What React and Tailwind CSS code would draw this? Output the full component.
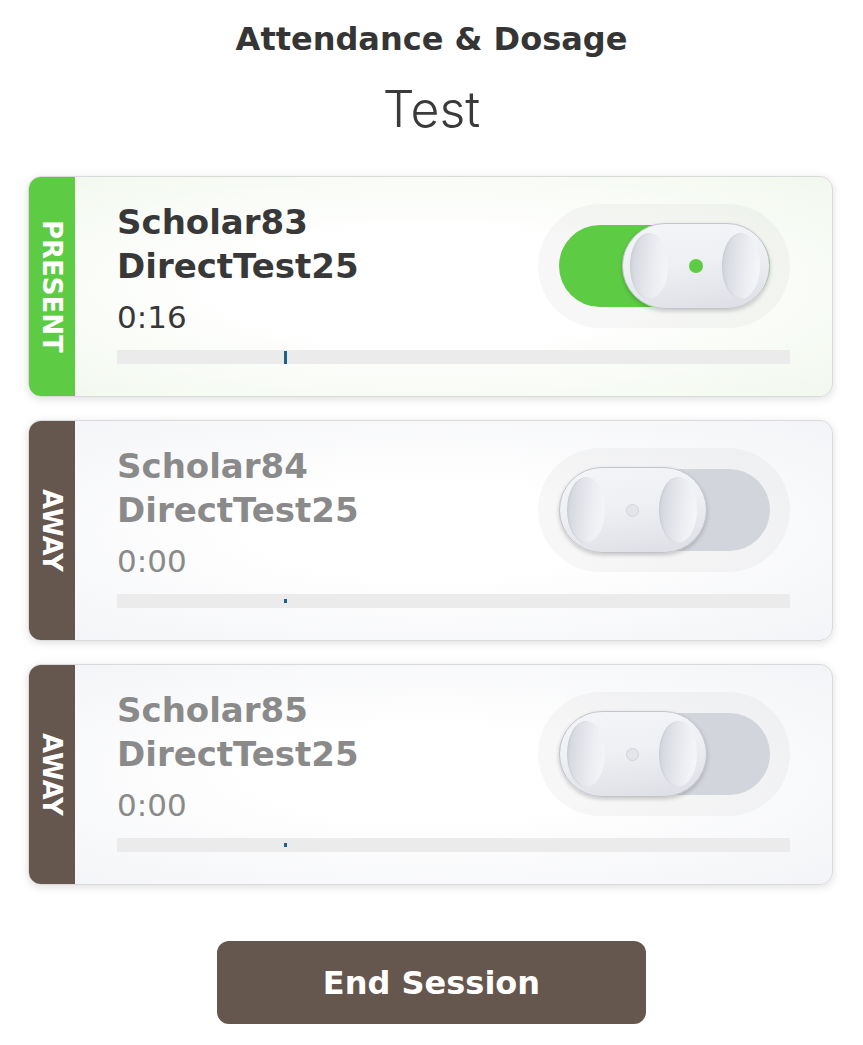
import React from "react";

const students = [
  { name: "Scholar83", last: "DirectTest25", time: "0:16", present: true },
  { name: "Scholar84", last: "DirectTest25", time: "0:00", present: false },
  { name: "Scholar85", last: "DirectTest25", time: "0:00", present: false },
];

function Thumb({ on }) {
  return (
    <div
      className={
        "absolute top-[-2px] w-[148px] h-[86px] rounded-full border border-[#c4c5cb] bg-[linear-gradient(172deg,#f4f5f8_0%,#eef0f3_45%,#dcdee5_100%)] shadow-[0_2px_4px_rgba(0,0,0,0.2)] " +
        (on ? "right-0" : "left-0")
      }
    >
      <div className="absolute left-[7px] top-[9px] w-[38px] h-[66px] rounded-[50%] bg-[linear-gradient(95deg,#cfd1da_0%,#dcdee5_25%,#eceef2_65%,#f5f6f8_100%)] shadow-[inset_1px_0_2px_rgba(0,0,0,0.06)]" />
      <div className="absolute right-[9px] top-[9px] w-[38px] h-[66px] rounded-[50%] bg-[linear-gradient(95deg,#cfd1da_0%,#dcdee5_25%,#eceef2_65%,#f7f8fa_100%)] shadow-[inset_1px_0_2px_rgba(0,0,0,0.06)]" />
      <div className="absolute inset-0 flex items-center justify-center">
        {on ? (
          <div className="w-[14px] h-[14px] rounded-full bg-[#5ecb45]" />
        ) : (
          <div className="w-[13px] h-[13px] rounded-full bg-[#e4e5ea] border border-[#d2d3d9]" />
        )}
      </div>
    </div>
  );
}

function Toggle({ on }) {
  return (
    <div className="w-[252px] h-[124px] rounded-full bg-black/[0.03] flex items-center justify-center">
      <div
        className={
          "relative w-[211px] h-[82px] rounded-full " +
          (on ? "bg-[#5ecb45]" : "bg-[#d3d5dc]")
        }
      >
        <Thumb on={on} />
      </div>
    </div>
  );
}

function Card({ s }) {
  const present = s.present;
  return (
    <div
      className={
        "flex h-[221px] rounded-[13px] overflow-hidden border border-[#dadada] shadow-[0_2px_8px_rgba(0,0,0,0.13)] " +
        (present
          ? "bg-[radial-gradient(ellipse_at_center,#ffffff_35%,#f2f8ee_100%)]"
          : "bg-[radial-gradient(ellipse_at_center,#ffffff_30%,#f3f4f7_100%)]")
      }
    >
      <div
        className={
          "w-[46px] shrink-0 flex items-center justify-center " +
          (present ? "bg-[#5ecb45]" : "bg-[#65574e]")
        }
      >
        <span className="[writing-mode:vertical-rl] text-white font-bold text-[26px] leading-none">
          {present ? "PRESENT" : "AWAY"}
        </span>
      </div>
      <div className="flex-1 flex flex-col pl-[42px] pr-[42px] pt-[23px] pb-[32px]">
        <div className="flex justify-between items-start">
          <div className={present ? "text-[#383838]" : "text-[#8a8a8a]"}>
            <div className="font-bold text-[34px] leading-[44px]">{s.name}</div>
            <div className="font-bold text-[34px] leading-[44px]">{s.last}</div>
            <div className="mt-[7px] text-[31px] leading-[44px]">{s.time}</div>
          </div>
          <div className="mt-[4px]">
            <Toggle on={present} />
          </div>
        </div>
        <div className="relative mt-auto h-[14px] bg-[#ebebeb]">
          {present ? (
            <div className="absolute left-[24.8%] top-[1px] bottom-0 w-[3px] bg-[#1d5f8d]" />
          ) : (
            <div className="absolute left-[24.8%] top-[5px] w-[3px] h-[4px] bg-[#1d5f8d]" />
          )}
        </div>
      </div>
    </div>
  );
}

export default function App() {
  return (
    <div className="min-h-[1045px] w-full bg-white font-['DejaVu_Sans',sans-serif] pt-[19px]">
      <h1 className="text-center font-bold text-[32px] leading-[40px] text-[#353535]">
        Attendance &amp; Dosage
      </h1>
      <div className="mt-[20px] text-center font-['Inter',sans-serif] font-light text-[50px] leading-[60px] text-[#3a3a3a]">
        Test
      </div>
      <div className="mt-[37px] pl-[28px] pr-[30px] flex flex-col gap-[23px]">
        {students.map((s) => (
          <Card key={s.name} s={s} />
        ))}
      </div>
      <div className="mt-[56px] flex justify-center">
        <button className="w-[429px] h-[83px] rounded-[12px] bg-[#65574e] text-white font-bold text-[32px] leading-none flex items-center justify-center">
          End Session
        </button>
      </div>
    </div>
  );
}
